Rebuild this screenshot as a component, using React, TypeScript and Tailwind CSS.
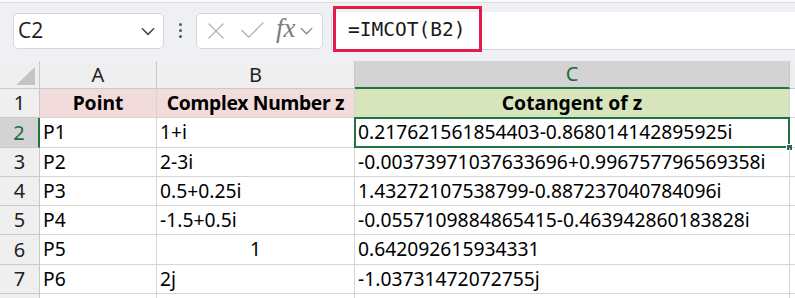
import React from "react";

type Row = { n: number; a: string; b: string; c: string; bCenter?: boolean };

const rows: Row[] = [
  { n: 2, a: "P1", b: "1+i", c: "0.217621561854403-0.868014142895925i" },
  { n: 3, a: "P2", b: "2-3i", c: "-0.00373971037633696+0.996757796569358i" },
  { n: 4, a: "P3", b: "0.5+0.25i", c: "1.43272107538799-0.887237040784096i" },
  { n: 5, a: "P4", b: "-1.5+0.5i", c: "-0.0557109884865415-0.463942860183828i" },
  { n: 6, a: "P5", b: "1", c: "0.642092615934331", bCenter: true },
  { n: 7, a: "P6", b: "2j", c: "-1.03731472072755j" },
];

function ChevronDown({ className }: { className?: string }) {
  return (
    <svg viewBox="0 0 16 16" className={className} fill="none" stroke="currentColor" strokeWidth={1.3} strokeLinecap="round" strokeLinejoin="round">
      <path d="M3 6l5 5 5-5" />
    </svg>
  );
}

const hdrCell = "bg-[#efefef] border-r border-b border-[#c9c9c9] flex items-center justify-center text-[20px] text-[#222]";
const dataCell = "border-r border-b border-[#d5d5d5] flex items-center text-[19.3px] text-black whitespace-nowrap";

export default function App() {
  return (
    <div className="w-[795px] h-[298px] overflow-hidden bg-white relative font-['Noto_Sans','Open_Sans',sans-serif]">
      {/* Toolbar */}
      <div className="h-[61px] bg-[#eef0f3] relative flex flex-col">
        <div className="h-[3px] bg-[#f8f8f9] border-b border-[#dcdde0]" />
        <div className="flex items-center flex-1 -mt-[3px]">
          {/* Name box */}
          <div className="ml-[13px] w-[151px] h-[36px] bg-white border border-[#d4d6da] rounded-[5px] flex items-center justify-between pl-[4px] pr-[6px]">
            <span className="text-[21px] text-[#1a1a1a] leading-none font-['Open_Sans','Noto_Sans',sans-serif]">C2</span>
            <ChevronDown className="w-[18px] h-[18px] text-[#444]" />
          </div>
          {/* colon */}
          <div className="w-[32px] flex flex-col items-center gap-[3px]">
            <span className="w-[3px] h-[3px] rounded-full bg-[#555]" />
            <span className="w-[3px] h-[3px] rounded-full bg-[#555]" />
            <span className="w-[3px] h-[3px] rounded-full bg-[#555]" />
          </div>
          {/* function box */}
          <div className="w-[127px] h-[36px] bg-white border border-[#d4d6da] rounded-[5px] flex items-center pl-[10px]">
            <svg viewBox="0 0 20 20" className="w-[18px] h-[18px]" fill="none" stroke="#a8a8a8" strokeWidth={1.3} strokeLinecap="round">
              <path d="M2 2l16 16M18 2L2 18" />
            </svg>
            <svg viewBox="0 0 24 20" className="w-[23px] h-[19px] ml-[16px]" fill="none" stroke="#a8a8a8" strokeWidth={1.3} strokeLinecap="round" strokeLinejoin="round">
              <path d="M1 10l7 7L23 2" />
            </svg>
            <span className="ml-[12px] font-[Liberation_Serif] text-[27px] italic text-[#7d7d7d] leading-none -mt-[4px]">fx</span>
            <ChevronDown className="w-[17px] h-[17px] text-[#888] ml-[2px]" />
          </div>
          {/* formula bar */}
          <div className="ml-[8px] flex-1 h-[38px] bg-white border-l border-b border-[#d4d6da] rounded-tl-[4px] flex items-center pl-[16px]">
            <span className="text-[19.5px] text-[#1a1a1a] leading-none font-['DejaVu_Sans_Mono','Liberation_Mono',monospace]">=IMCOT(B2)</span>
          </div>
        </div>
        {/* highlight annotation */}
        <div className="absolute left-[333px] top-[6px] w-[149px] h-[46px] border-[3px] border-[#e01d4b]" />
      </div>

      {/* Grid */}
      <div className="grid grid-cols-[40px_117px_198px_435px_5px] grid-rows-[28px_29px_30px_29px_29px_29px_30px_29px_4px]">
        {/* header row */}
        <div className="bg-[#efefef] border-r border-b border-[#c9c9c9] relative">
          <svg className="absolute left-[16px] top-[6px]" width="19" height="18" viewBox="0 0 19 18">
            <polygon points="19,0 19,18 0,18" fill="#c4c4c4" />
          </svg>
        </div>
        <div className={hdrCell}>A</div>
        <div className={hdrCell}>B</div>
        <div className="bg-[#d3d3d3] border-r border-r-[#c9c9c9] border-b-2 border-b-[#217346] flex items-center justify-center text-[20px] text-[#1d6b40]">C</div>
        <div className="bg-[#efefef] border-b border-[#c9c9c9]" />

        {/* row 1 */}
        <div className={hdrCell}>1</div>
        <div className="bg-[#f2dcdb] border-r border-b border-[#d5d5d5] flex items-center justify-center text-[19.3px] font-bold text-black">Point</div>
        <div className="bg-[#f2dcdb] border-r border-b border-[#d5d5d5] flex items-center justify-center text-[19.3px] font-bold text-black tracking-[-0.3px]">Complex Number z</div>
        <div className="bg-[#d8e4bc] border-r border-b border-[#d5d5d5] flex items-center justify-center text-[19.3px] font-bold text-black">Cotangent of z</div>
        <div className="border-b border-[#d5d5d5]" />

        {rows.map((r) => {
          const active = r.n === 2;
          return (
            <React.Fragment key={r.n}>
              <div
                className={
                  active
                    ? "bg-[#d3d3d3] border-r-2 border-r-[#217346] border-b border-b-[#c9c9c9] flex items-center justify-center text-[20px] text-[#1d6b40]"
                    : hdrCell
                }
              >
                {r.n}
              </div>
              <div className={`${dataCell} pl-[3px]`}>{r.a}</div>
              <div className={r.bCenter ? `${dataCell} justify-center` : `${dataCell} pl-[3px]`}>{r.b}</div>
              <div className={`${dataCell} pl-[3px] relative`}>
                {r.c}
                {active && (
                  <>
                    <div className="absolute -left-[1px] -top-[1px] -right-[1px] -bottom-[1px] border-2 border-[#217346]" />
                    <div className="absolute -right-[4px] -bottom-[4px] w-[7px] h-[7px] bg-[#217346] border border-white" />
                  </>
                )}
              </div>
              <div className="border-b border-[#d5d5d5]" />
            </React.Fragment>
          );
        })}

        {/* bottom partial row */}
        <div className="bg-[#efefef] border-r border-[#c9c9c9]" />
        <div className="border-r border-[#d5d5d5]" />
        <div className="border-r border-[#d5d5d5]" />
        <div className="border-r border-[#d5d5d5]" />
        <div />
      </div>
    </div>
  );
}
